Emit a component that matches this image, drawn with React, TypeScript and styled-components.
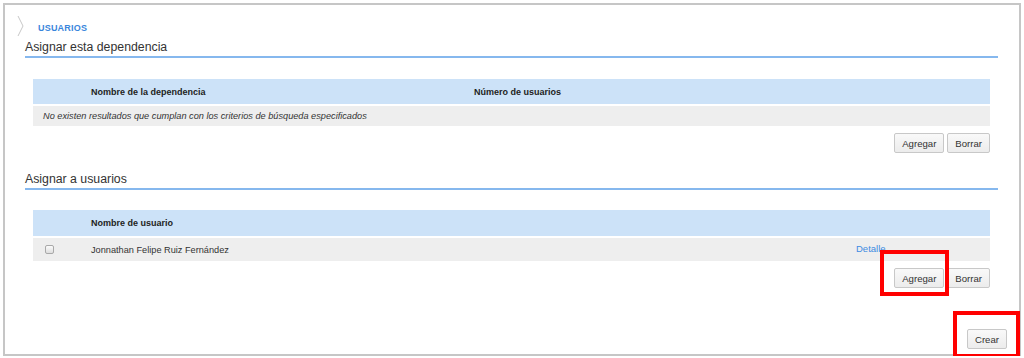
import React from 'react';
import styled, { createGlobalStyle } from 'styled-components';

const GlobalStyle = createGlobalStyle`
  body {
    margin: 0;
    background: #ffffff;
    font-family: "Liberation Sans", Arial, sans-serif;
  }
`;

const Frame = styled.div`
  position: relative;
  box-sizing: border-box;
  margin: 3px 3px 0 3px;
  width: 1018px;
  height: 353px;
  border: 2px solid #c6c6c6;
  padding: 10px 21px 0 0;
  display: flex;
  flex-direction: column;
`;

const Crumb = styled.div`
  display: flex;
  align-items: flex-start;
  gap: 13px;
  padding-left: 12px;
  height: 22px;
`;

const CrumbLabel = styled.span`
  margin-top: 8px;
  font-size: 9px;
  line-height: 11px;
  font-weight: bold;
  color: #3a86dc;
  letter-spacing: 0.2px;
`;

const Section = styled.div<{ $top: number }>`
  margin-top: ${(p) => p.$top}px;
  padding-left: 20px;
  display: flex;
  flex-direction: column;
`;

const SectionTitle = styled.h2`
  margin: 0;
  font-size: 12.3px;
  line-height: 15px;
  font-weight: normal;
  color: #333333;
  padding-bottom: 1px;
  border-bottom: 2px solid #86b8ee;
`;

const Grid = styled.div<{ $cols: string; $top: number }>`
  margin: ${(p) => p.$top}px 8px 0 8px;
  display: grid;
  grid-template-columns: ${(p) => p.$cols};
  row-gap: 2px;
`;

const HeadCell = styled.div<{ $h: number }>`
  height: ${(p) => p.$h}px;
  background: #cce2f8;
  display: flex;
  align-items: center;
  font-size: 9px;
  font-weight: bold;
  color: #222222;
`;

const Cell = styled.div<{ $h: number }>`
  height: ${(p) => p.$h}px;
  background: #eeeeee;
  display: flex;
  align-items: center;
  font-size: 9.2px;
  color: #333333;
`;

const EmptyCell = styled(Cell)`
  grid-column: 1 / -1;
  padding-left: 10px;
  font-style: italic;
`;

const CheckCell = styled(Cell)`
  padding-left: 12px;
`;

const Check = styled.span`
  box-sizing: border-box;
  width: 9px;
  height: 9px;
  border: 1px solid #a9a9a9;
  border-radius: 2px;
  background: linear-gradient(#fbfbfb, #dedede);
`;

const LinkCell = styled(Cell)`
  padding-bottom: 2px;
  box-sizing: border-box;
`;

const DetailLink = styled.a`
  color: #3d8be2;
  text-decoration: none;
  font-size: 9.5px;
`;

const Actions = styled.div<{ $top: number; $right: number }>`
  margin-top: ${(p) => p.$top}px;
  margin-right: ${(p) => p.$right}px;
  display: flex;
  justify-content: flex-end;
  gap: 3px;
`;

const Button = styled.button`
  box-sizing: border-box;
  height: 20px;
  padding: 0 7px;
  border: 1px solid #c8c8c8;
  border-radius: 2px;
  background: linear-gradient(#f9f9f9, #ececec);
  font-family: "Liberation Sans", Arial, sans-serif;
  font-size: 9.6px;
  color: #333333;
  cursor: pointer;
`;

const Marked = styled.span<{ $l: number; $r: number; $t: number; $b: number }>`
  position: relative;
  display: inline-flex;

  &::after {
    content: '';
    position: absolute;
    left: ${(p) => p.$l}px;
    right: ${(p) => p.$r}px;
    top: ${(p) => p.$t}px;
    bottom: ${(p) => p.$b}px;
    border: 4px solid #ff0000;
    pointer-events: none;
  }
`;

const Chevron = () => (
  <svg width="8" height="22" viewBox="0 0 8 22">
    <path d="M1 1 L6 11 L1 21" fill="none" stroke="#c8c8c8" strokeWidth="1" />
  </svg>
);

export default function App() {
  return (
    <>
      <GlobalStyle />
      <Frame>
        <Crumb>
          <Chevron />
          <CrumbLabel>USUARIOS</CrumbLabel>
        </Crumb>

        <Section $top={3}>
          <SectionTitle>Asignar esta dependencia</SectionTitle>
          <Grid $cols="58px 383px 1fr" $top={21}>
            <HeadCell $h={25} />
            <HeadCell $h={25}>Nombre de la dependencia</HeadCell>
            <HeadCell $h={25}>Número de usuarios</HeadCell>
            <EmptyCell $h={20}>
              No existen resultados que cumplan con los criterios de búsqueda especificados
            </EmptyCell>
          </Grid>
          <Actions $top={7} $right={8}>
            <Button>Agregar</Button>
            <Button>Borrar</Button>
          </Actions>
        </Section>

        <Section $top={19}>
          <SectionTitle>Asignar a usuarios</SectionTitle>
          <Grid $cols="58px 765px 1fr" $top={20}>
            <HeadCell $h={26} />
            <HeadCell $h={26}>Nombre de usuario</HeadCell>
            <HeadCell $h={26} />
            <CheckCell $h={23}>
              <Check />
            </CheckCell>
            <Cell $h={23}>Jonnathan Felipe Ruiz Fernández</Cell>
            <LinkCell $h={23}>
              <DetailLink href="#">Detalle</DetailLink>
            </LinkCell>
          </Grid>
          <Actions $top={7} $right={8}>
            <Marked $l={-14} $r={-5} $t={-18} $b={-8}>
              <Button>Agregar</Button>
            </Marked>
            <Button>Borrar</Button>
          </Actions>
        </Section>

        <Actions $top={41} $right={-9}>
          <Marked $l={-14} $r={-13} $t={-18} $b={-9}>
            <Button>Crear</Button>
          </Marked>
        </Actions>
      </Frame>
    </>
  );
}
